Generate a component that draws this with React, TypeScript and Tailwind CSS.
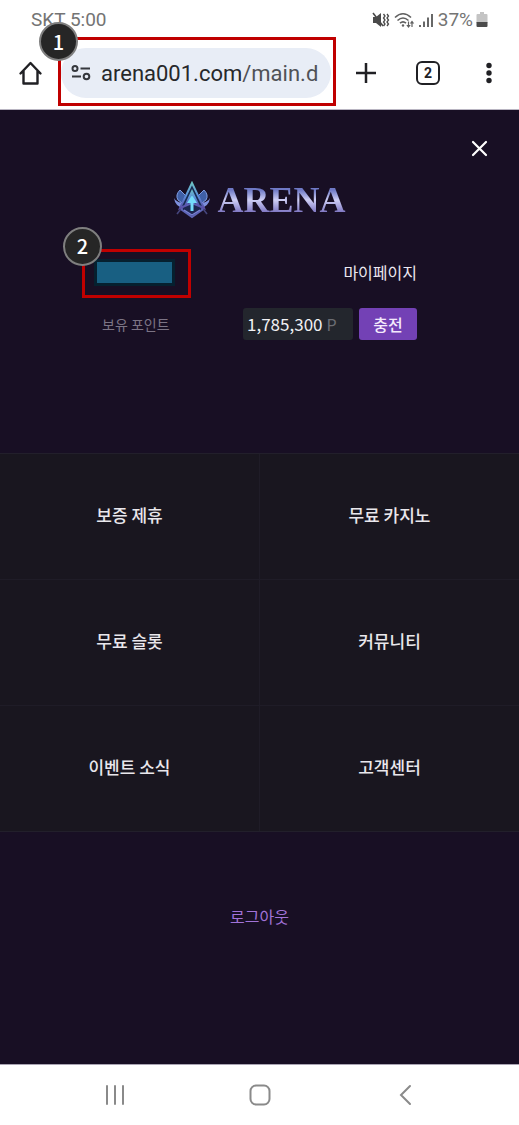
import type { ReactNode } from "react";

const menuItems = ["보증 제휴", "무료 카지노", "무료 슬롯", "커뮤니티", "이벤트 소식", "고객센터"];

function Marker({ children, className }: { children: ReactNode; className: string }) {
  return (
    <span
      className={`absolute z-10 flex size-[39px] items-center justify-center rounded-full border-2 border-[#7f7f7f] bg-[#262626] font-['Noto_Sans_CJK_KR',sans-serif] text-xl font-medium leading-none text-white ${className}`}
    >
      {children}
    </span>
  );
}

function StatusBar() {
  return (
    <div className="flex h-10 items-center justify-between px-[31px] font-['Roboto','Noto_Sans_CJK_KR',sans-serif] text-[19px] text-[#747474]">
      <span>SKT 5:00</span>
      <div className="flex items-center">
        <svg width="18" height="16" viewBox="0 0 18 16" fill="#4a4a4a" aria-hidden="true">
          <path d="M1 5h3l5-4v14l-5-4H1z" />
          <path d="M1 1l10 13" stroke="#4a4a4a" strokeWidth="1.6" />
          <path d="M11.5 2l1.5 2-1.5 2 1.5 2-1.5 2 1.5 2-1.5 2M15 2l1.500 2L15 6l1.500 2-1.500 2 1.500 2-1.500 2" fill="none" stroke="#4a4a4a" strokeWidth="1.300" />
        </svg>
        <svg className="ml-1" width="22" height="17" viewBox="0 0 22 17" fill="none" stroke="#606060" strokeWidth="1.600" aria-hidden="true">
          <path d="M1 5.500Q9 -2 17 5.500M3.500 8.500Q9 3.500 14.500 8.500M6 11.200Q9 8.500 12 11.200" />
          <circle cx="9" cy="13.500" r="1.200" fill="#606060" stroke="none" />
          <path d="M14.500 9.500v5M18 15v-5" strokeWidth="1.200" />
          <path d="M12.300 13h4.400l-2.200 3zM15.800 11.500h4.400L18 8.500z" fill="#606060" stroke="none" />
        </svg>
        <svg className="ml-[3px]" width="15" height="15" viewBox="0 0 15 15" fill="#686868" aria-hidden="true">
          <path d="M0 12h2v2H0zM4 8.500h2V14H4zM8 4.500h2V14H8zM12 1h2v13h-2z" />
        </svg>
        <span className="ml-1">37%</span>
        <svg className="ml-[3px]" width="12" height="16" viewBox="0 0 12 16" aria-hidden="true">
          <path d="M4 0h4v2h2.500q1 0 1 1v8H.5V3q0-1 1-1H4z" fill="#c4c4c4" />
          <path d="M.5 10h11v4q0 1-1 1h-9q-1 0-1-1z" fill="#4b4b4b" />
        </svg>
      </div>
    </div>
  );
}

function BrowserBar() {
  return (
    <header className="flex h-[70px] items-center border-b border-[#b9b5c2] pb-[3px] pl-[18px] font-['Roboto','Noto_Sans_CJK_KR',sans-serif] text-[#202024]">
      <button type="button" aria-label="Home" className="mr-[18px]">
        <svg width="25" height="26" viewBox="0 0 25 26" fill="none" stroke="currentColor" strokeWidth="2.400" strokeLinejoin="round" strokeLinecap="round">
          <path d="M2.500 13.500L12.500 3l10 10.500M5.500 11v12.500h14V11" />
        </svg>
      </button>
      <div className="relative mr-1 flex-1">
        <div className="flex h-[50px] items-center rounded-full bg-[#e8edf6] pl-[10px]">
          <svg className="shrink-0" width="20" height="18" viewBox="0 0 20 18" fill="none" stroke="#35383d" strokeWidth="2" aria-hidden="true">
            <circle cx="4" cy="4.500" r="2.500" />
            <path d="M9.500 4.500H19M1 12.500h9" />
            <circle cx="15.500" cy="12.500" r="2.800" />
          </svg>
          <span className="ml-[10px] whitespace-nowrap text-[22px] text-[#26282b]">
            arena001.com<span className="text-[#505257]">/main.d</span>
          </span>
        </div>
        <span className="pointer-events-none absolute -bottom-2 -left-[3px] -right-[5px] -top-[11px] border-[3px] border-[#c00000]" />
        <Marker className="-left-[22px] -top-[26px]">1</Marker>
      </div>
      <button type="button" aria-label="New tab" className="flex w-[62px] justify-center">
        <svg width="22" height="22" viewBox="0 0 22 22" stroke="currentColor" strokeWidth="2.500">
          <path d="M11 1v20M1 11h20" />
        </svg>
      </button>
      <button type="button" aria-label="Open tabs" className="flex w-[62px] justify-center">
        <span className="flex size-6 items-center justify-center rounded-[6px] border-2 border-current text-sm font-bold leading-none">2</span>
      </button>
      <button type="button" aria-label="More" className="flex w-[60px] justify-center">
        <svg width="6" height="22" viewBox="0 0 6 22" fill="currentColor">
          <circle cx="3" cy="3.500" r="2.700" />
          <circle cx="3" cy="11" r="2.700" />
          <circle cx="3" cy="18.500" r="2.700" />
        </svg>
      </button>
    </header>
  );
}

function Emblem() {
  return (
    <svg width="38" height="38" viewBox="0 0 38 38" fill="none" aria-hidden="true">
      <defs>
        <linearGradient id="steel" x1="0" y1="0" x2="0" y2="1">
          <stop offset="0" stopColor="#6cc3c4" />
          <stop offset=".5" stopColor="#5c8fdc" />
          <stop offset="1" stopColor="#5a4fa6" />
        </linearGradient>
      </defs>
      <path d="M4 33l10-13M34 33L24 20" stroke="#45457c" strokeWidth="1.600" />
      <path d="M8 21l1 8 10 7 10-7 1-8" fill="#1c2650" stroke="#5d63b4" strokeWidth="2" />
      <path d="M7 9l8 8-3 7-7-5Q2 14 7 9z" fill="#3f5fa6" stroke="#7e9be0" />
      <path d="M31 9l-8 8 3 7 7-5q3-5-2-10z" fill="#3f5fa6" stroke="#7e9be0" />
      <path d="M1 17q2 4 11 6l-2 4Q2 25 1 17zM37 17q-2 4-11 6l2 4q8-2 9-10z" fill="#7d8fdc" />
      <path d="M19 2L7 27l12-5 12 5z" fill="#172b52" stroke="url(#steel)" strokeWidth="2" />
      <path d="M19 8l-8 17 4-2 4-9 4 9 4 2z" fill="url(#steel)" />
      <path d="M19 14l-5 8h3.500v8h3v-8H24z" fill="#74dcfa" />
      <path d="M11 29l8 5 8-5" stroke="#7b83d6" strokeWidth="1.400" />
    </svg>
  );
}

export default function App() {
  return (
    <div className="flex min-h-screen flex-col bg-white font-['Noto_Sans_CJK_KR',sans-serif]">
      <StatusBar />
      <BrowserBar />
      <main className="flex flex-1 flex-col bg-[#180f24]">
        <div className="flex justify-end pr-[29px] pt-[28px]">
          <button type="button" aria-label="Close" className="text-white">
            <svg width="21" height="21" viewBox="0 0 21 21" stroke="currentColor" strokeWidth="2.200" strokeLinecap="round">
              <path d="M4 4l13 13M17 4L4 17" />
            </svg>
          </button>
        </div>
        <div className="mt-[21px] flex h-[40px] items-center justify-center gap-[6px]">
          <Emblem />
          <h1 className="bg-linear-to-b from-[#6f79c5] from-25% via-[#cfcff5] to-[#8179c4] to-80% bg-clip-text font-['Liberation_Serif',serif] text-[36px] font-bold leading-[40px] text-transparent">
            ARENA
          </h1>
        </div>
        <section className="flex flex-col gap-5 px-[102px] pb-[113px] pt-[36px]">
          <div className="flex h-8 items-center justify-between">
            <div className="relative -ml-2">
              <div className="h-[27px] w-[81px] border-[3px] border-[#06202f] bg-[#185f82]" />
              <span className="pointer-events-none absolute -bottom-3 -left-3 -right-4 -top-[10px] border-[3px] border-[#c00000]" />
              <Marker className="-left-[31px] -top-[32px]">2</Marker>
            </div>
            <a href="#mypage" className="text-base leading-6 text-[#ece8f0]">마이페이지</a>
          </div>
          <div className="flex h-8 items-center justify-between">
            <span className="text-sm text-[#7c7485]">보유 포인트</span>
            <div className="flex gap-[6px]">
              <div className="flex h-8 w-[110px] items-center gap-1 rounded-[3px] bg-[#23262d] pl-1 text-[17px] text-[#f1f1f4]">
                1,785,300<span className="text-base text-[#6b6d73]">P</span>
              </div>
              <button type="button" className="h-8 w-[58px] rounded-[3px] bg-[#7341b5] text-base font-medium text-[#f4eafc]">충전</button>
            </div>
          </div>
        </section>
        <nav className="grid grid-cols-2 gap-px border-y border-[#221f2b] bg-[#1f1c27]">
          {menuItems.map((item) => (
            <a key={item} href="#menu" className="flex h-[125px] items-center justify-center bg-[#19161f] pb-1 text-[17px] font-medium text-[#e9e7ec]">
              {item}
            </a>
          ))}
        </nav>
        <div className="flex justify-center pb-[134px] pt-[72px]">
          <button type="button" className="text-base leading-6 text-[#a173d8]">로그아웃</button>
        </div>
      </main>
      <footer className="flex h-[61px] items-center justify-around border-t border-[#a9a4b3] px-[42px] text-[#8a8a8a]">
        <button type="button" aria-label="Recent apps">
          <svg width="22" height="22" viewBox="0 0 22 22" stroke="currentColor" strokeWidth="2" strokeLinecap="round">
            <path d="M3 2v18M11 2v18M19 2v18" />
          </svg>
        </button>
        <button type="button" aria-label="Home screen">
          <svg width="22" height="22" viewBox="0 0 22 22" fill="none" stroke="currentColor" strokeWidth="2">
            <rect x="1.500" y="1.500" width="19" height="19" rx="5.500" />
          </svg>
        </button>
        <button type="button" aria-label="Back">
          <svg width="22" height="22" viewBox="0 0 22 22" fill="none" stroke="currentColor" strokeWidth="2" strokeLinecap="round">
            <path d="M16 2l-9 9 9 9" />
          </svg>
        </button>
      </footer>
    </div>
  );
}
